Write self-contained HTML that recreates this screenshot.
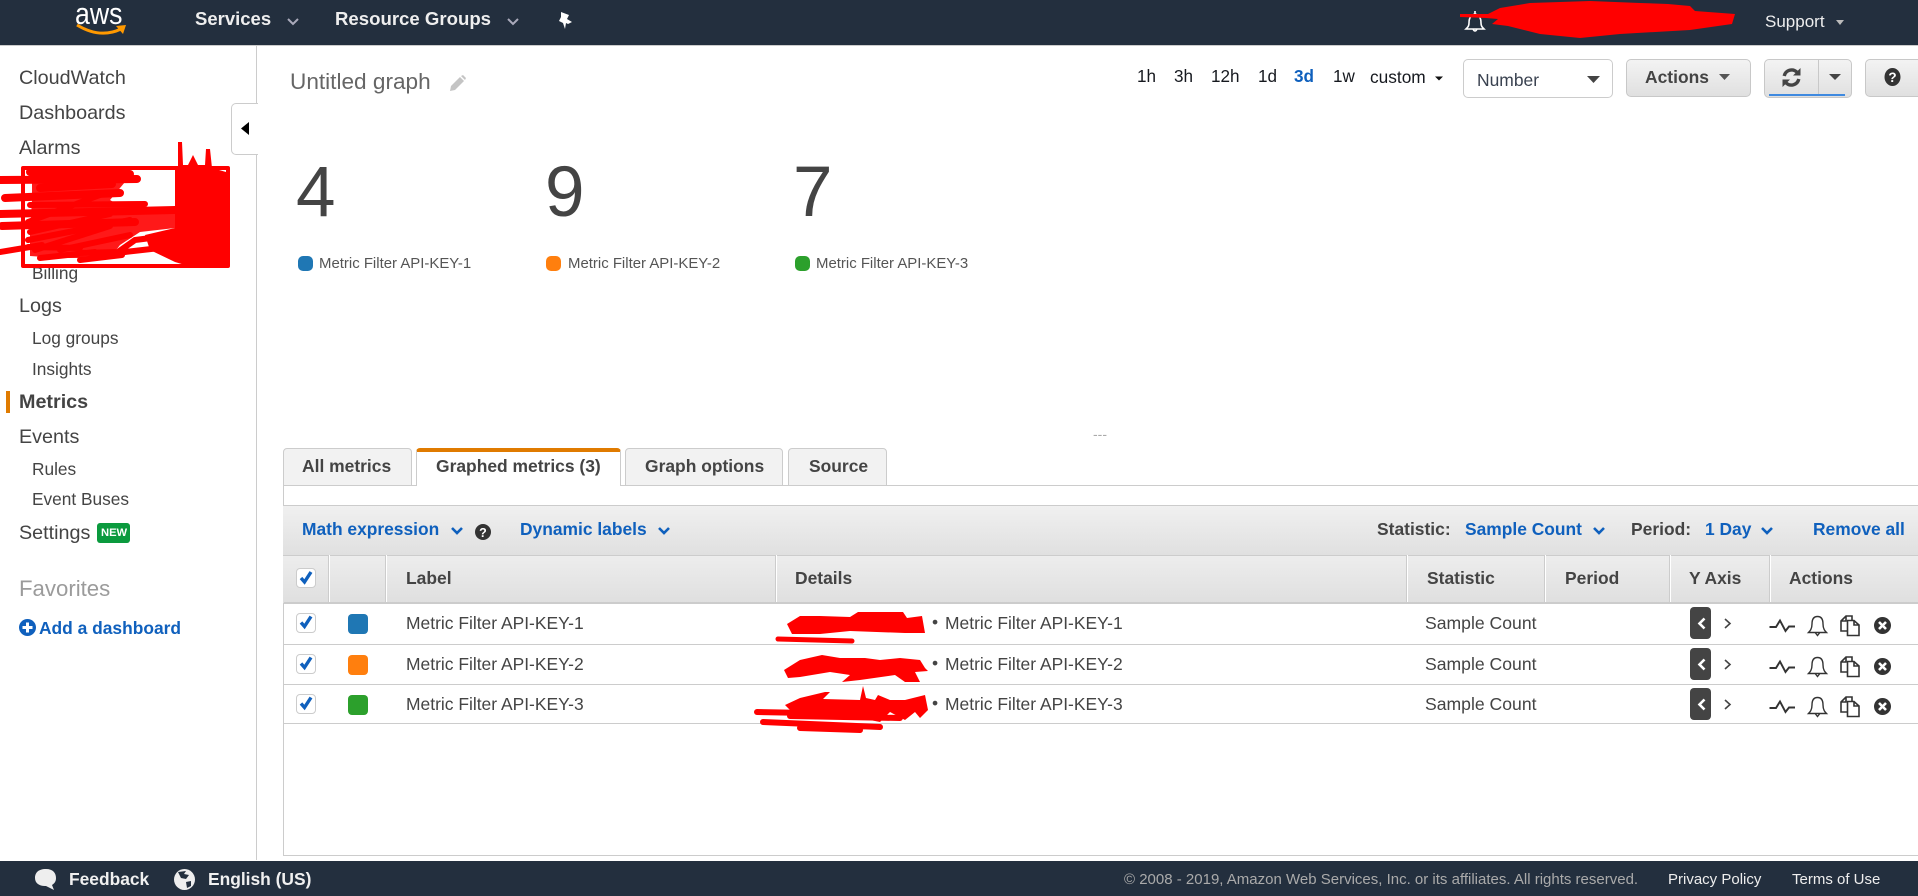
<!DOCTYPE html>
<html lang="en">
<head>
<meta charset="utf-8">
<title>CloudWatch Metrics</title>
<style>
html,body{margin:0;padding:0;width:1918px;height:896px;overflow:hidden;background:#fff;font-family:"Liberation Sans",Arial,sans-serif;color:#444}
.t{position:absolute;white-space:nowrap;line-height:24px;margin-top:-12px}
.box{position:absolute;box-sizing:border-box}
.b{font-weight:bold}
.s{font-size:17.45px}
.side{font-size:19.75px;color:#444;left:19px}
.sub{font-size:17.3px;color:#444;left:32px}
.blue{color:#0f60bd;font-weight:bold;font-size:17.4px}
.gr{background:linear-gradient(#f3f3f3,#e0e0e0);border:1px solid #c8c8c8;border-radius:5px}
.tab{position:absolute;box-sizing:border-box;top:448px;height:38px;background:#f2f2f2;border:1px solid #ccc;border-radius:4px 4px 0 0}
.cb{position:absolute;box-sizing:border-box;left:296px;width:20px;height:20px;background:#fff;border:1px solid #ccc;border-radius:4px}
.sw{position:absolute;left:348px;width:20px;height:20px;border-radius:4px}
.sep{position:absolute;top:555px;height:47px;width:1px;background:#ccc;border-right:1px solid #fff}
.line{position:absolute;left:283px;right:0;height:1px;background:#ccc}
.yb{position:absolute;left:1690px;width:21px;height:32px;background:#444;border-radius:4px}
svg{position:absolute;overflow:visible}
</style>
</head>
<body>

<!-- top nav -->
<div class="box" style="left:0;top:0;width:1918px;height:46px;background:#232f3e;border-bottom:1px solid #ccc"></div>
<div class="t" style="left:75px;top:14px;font-size:31px;color:#fff;transform:scaleX(.86);transform-origin:left center">aws</div>
<svg style="left:0;top:0" width="1918" height="46" viewBox="0 0 1918 46">
  <path d="M77 25 Q100 39 121 29" fill="none" stroke="#f90" stroke-width="3"/>
  <path d="M116 26 L126 25 L123 34 Z" fill="#f90"/>
  <path d="M288 19 L293 24 L298 19 M508 19 L513 24 L518 19" fill="none" stroke="#aab" stroke-width="2"/>
  <path d="M561 12 L569 15 L567 19 L572 22 L568 24 L566 23 L565 29 L563 23 L559 21 L561 17 Z" fill="#fff"/>
  <path d="M1475 11 L1475 14 C1470 15 1469 19 1469 23 C1469 26 1468 27 1466 29 L1484 29 C1482 27 1481 26 1481 23 C1481 19 1480 15 1475 14 M1473 29 Q1475 33 1477 29" fill="none" stroke="#fff" stroke-width="1.6"/>
  <path d="M1836 20 L1844 20 L1840 25 Z" fill="#bbb"/>
</svg>
<div class="t b" style="left:195px;top:19px;font-size:18.5px;color:#eee">Services</div>
<div class="t b" style="left:335px;top:19px;font-size:18.6px;color:#eee">Resource Groups</div>
<div class="t" style="left:1765px;top:22px;font-size:17px;color:#eee">Support</div>

<!-- sidebar -->
<div class="box" style="left:256px;top:46px;width:1px;height:814px;background:#ccc"></div>
<div class="t side" style="top:78px">CloudWatch</div>
<div class="t side" style="top:113px">Dashboards</div>
<div class="t side" style="top:148px">Alarms</div>
<div class="t sub" style="top:273px">Billing</div>
<div class="t side" style="top:306px">Logs</div>
<div class="t sub" style="top:338px">Log groups</div>
<div class="t sub" style="top:369px">Insights</div>
<div class="box" style="left:6px;top:391px;width:4px;height:22px;background:#e07b00"></div>
<div class="t side b" style="top:402px">Metrics</div>
<div class="t side" style="top:437px">Events</div>
<div class="t sub" style="top:469px">Rules</div>
<div class="t sub" style="top:499px">Event Buses</div>
<div class="t side" style="top:533px">Settings</div>
<div class="box" style="left:97px;top:523px;width:33px;height:20px;background:#0b9a3e;border-radius:3px"></div>
<div class="t b" style="left:101px;top:533px;font-size:11.2px;color:#fff">NEW</div>
<div class="t" style="left:19px;top:589px;font-size:22.2px;color:#9b9b9b">Favorites</div>
<svg style="left:19px;top:619px" width="17" height="17" viewBox="0 0 17 17">
  <circle cx="8.5" cy="8.5" r="8.5" fill="#0f60bd"/><path d="M8.5 3.5V13.5M3.5 8.5H13.5" stroke="#fff" stroke-width="3"/>
</svg>
<div class="t blue" style="left:39px;top:628px">Add a dashboard</div>

<!-- collapse toggle -->
<div class="box" style="left:231px;top:103px;width:27px;height:52px;background:#fff;border:1px solid #ccc;border-right:0;border-radius:5px 0 0 5px"></div>
<svg style="left:241px;top:122px" width="9" height="13" viewBox="0 0 9 13"><path d="M8 0V13L0 6.5Z" fill="#000"/></svg>

<!-- title row -->
<div class="t" style="left:290px;top:82px;font-size:22.6px;color:#666">Untitled graph</div>
<svg style="left:449px;top:75px" width="18" height="17" viewBox="0 0 18 17"><path d="M1 16 L2 11 L11 2 L15 6 L6 15 Z M12 1 L14 0 L17 3 L16 5 Z" fill="#c4c4c4"/></svg>

<div class="t" style="left:1137px;top:77px;font-size:17.1px;color:#16191f">1h</div>
<div class="t" style="left:1174px;top:77px;font-size:17.1px;color:#16191f">3h</div>
<div class="t" style="left:1211px;top:77px;font-size:17.1px;color:#16191f">12h</div>
<div class="t" style="left:1258px;top:77px;font-size:17.1px;color:#16191f">1d</div>
<div class="t b" style="left:1294px;top:77px;font-size:17.1px;color:#0f60bd">3d</div>
<div class="t" style="left:1333px;top:77px;font-size:17.1px;color:#16191f">1w</div>
<div class="t" style="left:1370px;top:77px;font-size:17.3px;color:#16191f">custom</div>

<div class="box" style="left:1463px;top:59px;width:150px;height:39px;background:#fff;border:1px solid #ccc;border-radius:5px"></div>
<div class="t s" style="left:1477px;top:80px;color:#3a4250">Number</div>
<div class="box gr" style="left:1626px;top:59px;width:125px;height:38px"></div>
<div class="t s b" style="left:1645px;top:77px">Actions</div>
<div class="box gr" style="left:1764px;top:59px;width:88px;height:39px"></div>
<div class="box" style="left:1818px;top:60px;width:1px;height:34px;background:#c8c8c8"></div>
<div class="box" style="left:1769px;top:94px;width:76px;height:2px;background:#3f8ae0"></div>
<svg style="left:1781px;top:67px" width="21" height="21" viewBox="0 0 21 21">
  <path d="M3.2 9 A7.6 7.6 0 0 1 16 5.2 M17.8 12 A7.6 7.6 0 0 1 5 15.8" fill="none" stroke="#444" stroke-width="3.4"/>
  <path d="M19.5 1 V8.5 H12 Z M1.5 20 V12.5 H9 Z" fill="#444"/>
</svg>
<div class="box gr" style="left:1865px;top:59px;width:60px;height:38px"></div>
<svg style="left:1884px;top:68px" width="17" height="18" viewBox="0 0 17 18">
  <ellipse cx="8.5" cy="9" rx="8" ry="9" fill="#333"/>
  <text x="8.5" y="14" text-anchor="middle" font-family="Liberation Sans" font-weight="bold" font-size="13.5" fill="#fff">?</text>
</svg>
<svg style="left:0;top:0" width="1918" height="120" viewBox="0 0 1918 120">
  <path d="M1435 76.5 L1443 76.5 L1439 80.5 Z" fill="#111"/>
  <path d="M1587 76 L1600 76 L1593.5 83 Z" fill="#444"/>
  <path d="M1719 74 L1730 74 L1724.5 80 Z" fill="#555"/>
  <path d="M1829 74 L1841 74 L1835 80 Z" fill="#444"/>
</svg>

<!-- big numbers -->
<div class="t" style="left:296px;top:193px;font-size:71px;line-height:80px;margin-top:-40px;color:#444">4</div>
<div class="t" style="left:545px;top:193px;font-size:71px;line-height:80px;margin-top:-40px;color:#444">9</div>
<div class="t" style="left:793px;top:193px;font-size:71px;line-height:80px;margin-top:-40px;color:#444">7</div>
<div class="box" style="left:298px;top:256px;width:15px;height:15px;border-radius:5px;background:#1f77b4"></div>
<div class="box" style="left:546px;top:256px;width:15px;height:15px;border-radius:5px;background:#ff7f0e"></div>
<div class="box" style="left:795px;top:256px;width:15px;height:15px;border-radius:5px;background:#2ca02c"></div>
<div class="t" style="left:319px;top:264px;font-size:14.95px;color:#555">Metric Filter API-KEY-1</div>
<div class="t" style="left:568px;top:264px;font-size:14.95px;color:#555">Metric Filter API-KEY-2</div>
<div class="t" style="left:816px;top:264px;font-size:14.95px;color:#555">Metric Filter API-KEY-3</div>
<div class="t" style="left:1093px;top:434px;font-size:14px;color:#aaa">---</div>

<!-- tabs -->
<div class="line" style="top:485px"></div>
<div class="tab" style="left:283px;width:129px"></div>
<div class="tab" style="left:416px;width:205px;background:#fff;border-bottom:0;border-top:4px solid #e07b00"></div>
<div class="tab" style="left:625px;width:158px"></div>
<div class="tab" style="left:788px;width:99px"></div>
<div class="t s b" style="left:302px;top:466px">All metrics</div>
<div class="t s b" style="left:436px;top:466px">Graphed metrics (3)</div>
<div class="t s b" style="left:645px;top:466px">Graph options</div>
<div class="t s b" style="left:809px;top:466px">Source</div>

<!-- panel -->
<div class="box" style="left:283px;top:485px;width:1px;height:371px;background:#ccc"></div>
<div class="line" style="top:855px"></div>
<div class="box" style="left:283px;top:505px;width:1635px;height:51px;background:linear-gradient(#f0f0f0,#e0e0e0);border-top:1px solid #ccc;border-bottom:1px solid #ccc"></div>
<div class="t blue" style="left:302px;top:529px">Math expression</div>
<div class="t blue" style="left:520px;top:529px">Dynamic labels</div>
<div class="t s b" style="left:1377px;top:529px">Statistic:</div>
<div class="t blue" style="left:1465px;top:529px">Sample Count</div>
<div class="t s b" style="left:1631px;top:529px">Period:</div>
<div class="t blue" style="left:1705px;top:529px">1 Day</div>
<div class="t blue" style="left:1813px;top:529px">Remove all</div>
<svg style="left:0;top:0" width="1918" height="560" viewBox="0 0 1918 560">
  <path d="M452 528 L457 533 L462 528 M659 528 L664 533 L669 528 M1594 528 L1599 533 L1604 528 M1762 528 L1767 533 L1772 528" fill="none" stroke="#0f60bd" stroke-width="2.6"/>
  <ellipse cx="483" cy="532" rx="8" ry="8" fill="#333"/>
  <text x="483" y="537" text-anchor="middle" font-family="Liberation Sans" font-weight="bold" font-size="12.5" fill="#fff">?</text>
</svg>

<!-- table head -->
<div class="box" style="left:283px;top:556px;width:1635px;height:47px;background:linear-gradient(#ededed,#dfdfdf)"></div>
<div class="box" style="left:284px;top:602px;width:1634px;height:2px;background:#ccc"></div>
<div class="sep" style="left:328px"></div>
<div class="sep" style="left:385px"></div>
<div class="sep" style="left:775px"></div>
<div class="sep" style="left:1406px"></div>
<div class="sep" style="left:1544px"></div>
<div class="sep" style="left:1669px"></div>
<div class="sep" style="left:1769px"></div>
<div class="t s b" style="left:406px;top:578px">Label</div>
<div class="t s b" style="left:795px;top:578px">Details</div>
<div class="t s b" style="left:1427px;top:578px">Statistic</div>
<div class="t s b" style="left:1565px;top:578px">Period</div>
<div class="t s b" style="left:1689px;top:578px">Y Axis</div>
<div class="t s b" style="left:1789px;top:578px">Actions</div>

<!-- rows -->
<div class="line" style="top:644px"></div>
<div class="line" style="top:684px"></div>
<div class="line" style="top:723px"></div>
<div class="cb" style="top:568px"></div>
<div class="cb" style="top:613px"></div>
<div class="cb" style="top:654px"></div>
<div class="cb" style="top:694px"></div>
<svg style="left:0;top:0" width="1918" height="896" viewBox="0 0 1918 896">
  <path d="M301 578 L304.500 582 L311 572 M301 622.500 L304.500 626.500 L311 616.500 M301 663.500 L304.500 667.500 L311 657.500 M301 703.500 L304.500 707.500 L311 697.500" fill="none" stroke="#0f60bd" stroke-width="3.4"/>
</svg>
<div class="sw" style="top:614px;background:#1f77b4"></div>
<div class="sw" style="top:655px;background:#ff7f0e"></div>
<div class="sw" style="top:695px;background:#2ca02c"></div>

<div class="t s" style="left:406px;top:623px">Metric Filter API-KEY-1</div>
<div class="t s" style="left:406px;top:664px">Metric Filter API-KEY-2</div>
<div class="t s" style="left:406px;top:704px">Metric Filter API-KEY-3</div>
<div class="t s" style="left:932px;top:622px">•</div>
<div class="t s" style="left:932px;top:663px">•</div>
<div class="t s" style="left:932px;top:703px">•</div>
<div class="t s" style="left:945px;top:623px">Metric Filter API-KEY-1</div>
<div class="t s" style="left:945px;top:664px">Metric Filter API-KEY-2</div>
<div class="t s" style="left:945px;top:704px">Metric Filter API-KEY-3</div>
<div class="t" style="left:1425px;top:623px;font-size:17.6px">Sample Count</div>
<div class="t" style="left:1425px;top:664px;font-size:17.6px">Sample Count</div>
<div class="t" style="left:1425px;top:704px;font-size:17.6px">Sample Count</div>

<div class="yb" style="top:607px"></div>
<div class="yb" style="top:648px"></div>
<div class="yb" style="top:688px"></div>

<svg style="left:0;top:0" width="1918" height="896" viewBox="0 0 1918 896">
  <defs>
    <g id="rowicons">
      <path d="M1704.500 618.500 L1699.500 623.500 L1704.500 628.500" fill="none" stroke="#fff" stroke-width="2.6"/>
      <path d="M1725 619 L1730 623.500 L1725 628" fill="none" stroke="#444" stroke-width="1.6"/>
      <path d="M1769.500 627 L1776 627 L1780 620.500 L1785.500 631 L1789 626.500 L1795 626.500" fill="none" stroke="#333" stroke-width="1.9"/>
      <path d="M1817.500 616.500 C1813 616.500 1812 620 1812 624 C1812 629 1810 631 1808.500 632.500 L1826.500 632.500 C1825 631 1823 629 1823 624 C1823 620 1822 616.500 1817.500 616.500 Z M1815.500 633 L1817.500 635.500 L1819.500 633" fill="none" stroke="#333" stroke-width="1.4"/>
      <path d="M1847 631 L1841 631 L1841 621 L1846 616 L1852 616 L1852 620 M1846 616 L1846 621 L1841 621" fill="none" stroke="#333" stroke-width="1.6"/>
      <path d="M1847.500 620.500 L1854 620.500 L1859 625 L1859 635.500 L1847.500 635.500 Z M1854 620.500 L1854 625 L1859 625" fill="none" stroke="#333" stroke-width="1.6"/>
      <circle cx="1882.500" cy="625.500" r="8.500" fill="#333"/>
      <path d="M1879 622 L1886 629 M1886 622 L1879 629" stroke="#fff" stroke-width="2.6"/>
    </g>
  </defs>
  <use href="#rowicons"/>
  <use href="#rowicons" y="41"/>
  <use href="#rowicons" y="81"/>
</svg>

<!-- footer -->
<div class="box" style="left:0;top:861px;width:1918px;height:35px;background:#232f3e"></div>
<svg style="left:0;top:861px" width="400" height="35" viewBox="0 0 400 35">
  <path d="M46 8 C38 8 35 12 35 17 C35 22 39 25 45 25 L46 25 L54 29 L52 24 C55 22 56 20 56 17 C56 12 53 8 46 8 Z" fill="#eee"/>
  <circle cx="184.500" cy="18.500" r="10.500" fill="#eee"/>
  <path d="M178 11 L186 10 L184 13 L189 14 L186 18 L181 17 Z M186 21 L191 20 L191 25 L187 27 Z" fill="#232f3e"/>
</svg>
<div class="t b" style="left:69px;top:879px;font-size:17.4px;color:#f0f0f0">Feedback</div>
<div class="t b" style="left:208px;top:879px;font-size:17.4px;color:#f0f0f0">English (US)</div>
<div class="t" style="left:1124px;top:880px;font-size:15px;color:#aaa">© 2008 - 2019, Amazon Web Services, Inc. or its affiliates. All rights reserved.</div>
<div class="t" style="left:1668px;top:880px;font-size:15px;color:#eee">Privacy Policy</div>
<div class="t" style="left:1792px;top:880px;font-size:15px;color:#eee">Terms of Use</div>

<!-- red redactions -->
<svg style="left:0;top:0" width="1918" height="896" viewBox="0 0 1918 896">
  <g fill="#f00" stroke="none">
    <path d="M1460 14 L1488 14 L1500 8 L1530 3 L1590 1 L1640 3 L1668 4 L1690 6 L1695 11 L1735 14 L1732 24 L1690 30 L1620 34 L1580 38 L1540 34 L1508 26 L1492 24 L1498 19 L1486 18 L1460 17 Z"/>
    <path d="M175 168 L178 168 L178 142 L182 142 L183 165 L188 165 L193 155 L198 165 L205 165 L206 149 L210 149 L212 168 L226 172 L228 266 L195 268 L175 262 L150 250 L145 235 L175 228 Z"/>
    <path d="M787 624 L800 616 L820 616 L850 617 L858 612 L903 612 L907 618 L922 616 L925 633 L905 633 L850 631 L820 634 L792 634 Z"/>
    <path d="M784 670 L800 660 L822 655 L840 658 L865 658 L880 660 L900 658 L920 660 L925 668 L928 671 L915 672 L920 682 L905 682 L895 675 L860 680 L842 682 L850 675 L830 672 L800 677 L788 678 Z"/>
    <path d="M785 705 L800 698 L825 692 L830 692 L823 699 L860 700 L863 686 L866 698 L875 700 L878 695 L890 700 L905 700 L925 695 L928 710 L920 718 L915 712 L905 720 L890 712 L880 722 L860 718 L800 712 L790 710 Z"/>
    <path d="M32 170 L115 170 L125 182 L110 200 L120 206 L175 208 L175 228 L140 232 L120 245 L110 258 L60 258 L30 256 L30 232 L32 200 Z" fill-opacity="0.9"/>
  </g>
  <g fill="none" stroke="#f00" stroke-linecap="round" stroke-linejoin="round">
    <rect x="23" y="168" width="205" height="98" stroke-width="4"/>
    <path d="M0 180 L137 179 M30 172 L130 174 M5 198 L120 193 M0 214 L175 210 M2 226 L135 222 M40 188 L112 184" stroke-width="8"/>
    <path d="M30 205 L145 204 M0 252 L42 245 M28 240 L130 220 M35 250 L110 226 M60 250 L130 235 M30 232 L110 214 M28 247 L80 248 M80 260 L122 255 M80 253 L118 252 L135 240 L175 235 M28 222 L100 195 M40 258 L95 252 M125 252 L160 248" stroke-width="6"/>
    <path d="M778 639 L852 641" stroke-width="5"/>
    <path d="M757 712 L860 714 M763 722 L880 727 M800 728 L860 730 M790 716 L900 718" stroke-width="6"/>
  </g>
</svg>
</body>
</html>
